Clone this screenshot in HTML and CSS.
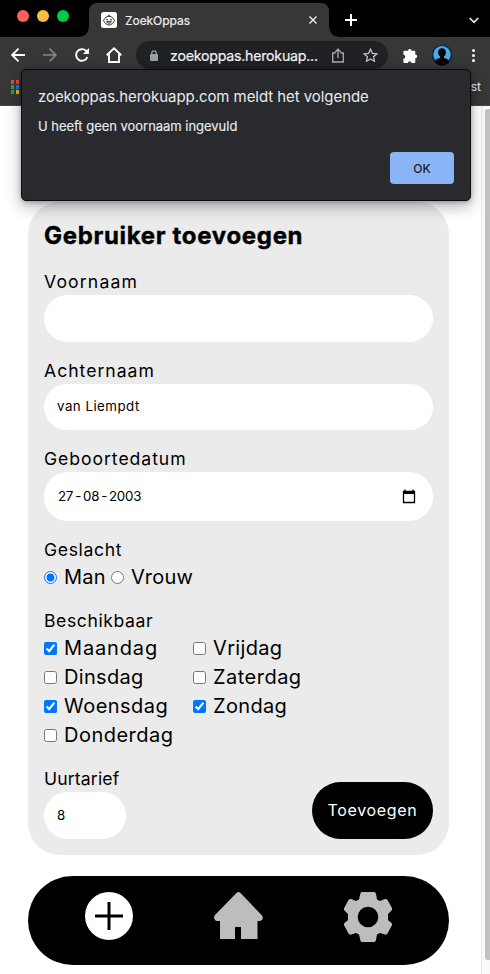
FILE: index.html
```html
<!DOCTYPE html>
<html lang="nl">
<head>
<meta charset="utf-8">
<title>ZoekOppas</title>
<link rel="stylesheet" href="styles.css">
</head>
<body>
<header class="browser">
  <div class="tabstrip">
    <div class="lights"><i class="light red"></i><i class="light yellow"></i><i class="light green"></i></div>
    <div class="tab">
      <svg class="favicon" width="16" height="16" viewBox="0 0 16 16"><rect width="16" height="16" rx="2.5" fill="#fff"/><path d="M2.5 8.4C4 5.500 6 4.300 8 4.300s4 1.200 5.500 4.100C12 11.500 10 13 8 13s-4-1.500-5.500-4.600zM7 4.300c0-1.500 2-1.500 2 .4M5.700 9.700c1 2 3.600 2 4.600 0z" fill="none" stroke="#222" stroke-width="1"/><circle cx="6" cy="7.800" r=".8"/><circle cx="10" cy="7.800" r=".8"/></svg>
      <span class="tab-title">ZoekOppas</span>
      <svg class="tab-close" width="8" height="8" viewBox="0 0 8 8"><path d="M.5.5l7 7m0-7l-7 7" stroke="#eee" stroke-width="1.400"/></svg>
    </div>
    <svg class="new-tab" width="12" height="12" viewBox="0 0 12 12"><path d="M6 0v12M0 6h12" stroke="#fff" stroke-width="2"/></svg>
    <svg class="chevron" width="10" height="7" viewBox="0 0 10 7"><path d="M.7 1L5 5.300 9.300 1" fill="none" stroke="#eee" stroke-width="1.700"/></svg>
  </div>
  <div class="toolbar">
    <svg class="back" width="14" height="14" viewBox="0 0 14 14"><path d="M14 7H1.500M7.500 .7L1.200 7l6.300 6.300" fill="none" stroke="#fff" stroke-width="1.900"/></svg>
    <svg class="forward" width="14" height="14" viewBox="0 0 14 14"><path d="M0 7h12.500M6.500 .7L12.800 7l-6.300 6.300" fill="none" stroke="#858585" stroke-width="1.700"/></svg>
    <svg class="reload" width="14" height="14" viewBox="0 0 14 14"><path d="M12.400 9A5.800 5.800 0 1 1 11 2.800L12.500 4.300" fill="none" stroke="#fff" stroke-width="1.900"/><path d="M14 0v6H8z" fill="#fff"/></svg>
    <svg class="home-button" width="16" height="16" viewBox="0 0 16 16"><path d="M.7 8.300L8 1.300l7.300 7M3 7v8h10V7" fill="none" stroke="#fff" stroke-width="1.900"/></svg>
    <div class="address">
      <svg class="lock" width="8" height="11" viewBox="0 0 8 11"><path d="M1.800 5V3a2.200 2.200 0 0 1 4.400 0v2" fill="none" stroke="#9aa0a6" stroke-width="1.300"/><rect y="4" width="8" height="7" rx="1" fill="#9aa0a6"/></svg>
      <span class="url">zoekoppas.herokuap...</span>
      <svg class="share" width="12" height="15" viewBox="0 0 12 15"><path d="M3.500 5H.7v9h10.600V5H8.500M6 10V1.300M3.200 4L6 1.200 8.800 4" fill="none" stroke="#aaadb0" stroke-width="1.300"/></svg>
      <svg class="star" width="15" height="14" viewBox="0 0 15 14"><path d="M7.500 1.200l1.900 4.100 4.500.5-3.300 3 .9 4.400-4-2.300-4 2.300.9-4.400-3.300-3 4.500-.5z" fill="none" stroke="#c0c2c5" stroke-width="1.300"/></svg>
    </div>
    <svg class="puzzle" width="15" height="15" viewBox="0 0 15 15"><path d="M5 2.700a1.800 1.800 0 0 1 3.600 0h2.700q1 0 1 1v2.700a1.900 1.900 0 0 1 0 3.800V14q0 1-1 1H8.400a1.700 1.700 0 0 0-3.400 0H1.400q-1 0-1-1v-3.400a1.900 1.900 0 0 0 0-3.800V3.700q0-1 1-1z" fill="#fff"/></svg>
    <svg class="avatar" width="22" height="22" viewBox="0 0 22 22"><circle cx="11" cy="11" r="10.500" fill="#142e43"/><circle cx="11" cy="10.500" r="8.600" fill="#4babe6"/><ellipse cx="11" cy="8.500" rx="3.800" ry="4.200" fill="#000"/><path d="M9 11h4v3c4 .5 5 2.500 5 4.800a10 10 0 0 1-14 0c0-2.300 1-4.300 5-4.800z" fill="#000"/></svg>
    <div class="menu"><i></i><i></i><i></i></div>
  </div>
  <div class="bookmarks">
    <div class="apps"><i class="r"></i><i class="r"></i><i class="g"></i><i class="b"></i><i class="g"></i><i class="y"></i></div>
    <span class="bookmark">st</span>
  </div>
</header>

<div class="viewport">
  <main class="page">
    <form class="card">
      <h1>Gebruiker toevoegen</h1>
      <div class="field">
        <label class="voornaam" for="voornaam">Voornaam</label>
        <input class="text-input" id="voornaam" type="text">
      </div>
      <div class="field">
        <label class="achternaam" for="achternaam">Achternaam</label>
        <input class="text-input short achter-input" id="achternaam" type="text" value="van Liempdt">
      </div>
      <div class="field">
        <div class="label geboorte">Geboortedatum</div>
        <div class="text-input date">
          <span>27<b>-</b>08<b>-</b>2003</span>
          <svg width="14" height="15" viewBox="0 0 14 15"><path d="M1.500 2.500h11v11h-11zM3 .5v2M11 .5v2" fill="none" stroke="#000" stroke-width="1.300"/><path d="M1 2h12v3H1z"/></svg>
        </div>
      </div>
      <div class="field">
        <div class="label geslacht">Geslacht</div>
        <div class="options">
          <label class="option man"><input type="radio" name="geslacht" checked><span>Man</span></label>
          <label class="option vrouw"><input type="radio" name="geslacht"><span>Vrouw</span></label>
        </div>
      </div>
      <div class="field">
        <div class="label beschikbaar">Beschikbaar</div>
        <div class="days">
          <label class="option maandag"><input type="checkbox" checked><span>Maandag</span></label>
          <label class="option dinsdag"><input type="checkbox"><span>Dinsdag</span></label>
          <label class="option"><input type="checkbox" checked><span>Woensdag</span></label>
          <label class="option"><input type="checkbox"><span>Donderdag</span></label>
          <label class="option vrijdag"><input type="checkbox"><span>Vrijdag</span></label>
          <label class="option"><input type="checkbox"><span>Zaterdag</span></label>
          <label class="option zondag"><input type="checkbox" checked><span>Zondag</span></label>
        </div>
      </div>
      <div class="bottom-row">
        <div class="field rate">
          <label class="uurtarief" for="tarief">Uurtarief</label>
          <input class="text-input" id="tarief" type="text" value="8">
        </div>
        <button class="submit" type="button">Toevoegen</button>
      </div>
    </form>
    <nav class="nav">
      <svg class="nav-add" width="48" height="48" viewBox="0 0 48 48"><circle cx="24" cy="24" r="24" fill="#fff"/><path d="M24 10v28M10 24h28" stroke="#000" stroke-width="3"/></svg>
      <svg class="nav-home" width="49" height="48" viewBox="0 0 49 48"><path d="M22.500 1Q24.500-1 26.500 1L48 23.500Q49.500 25.500 48 28Q47 29 45 29H43.500V47H27V35H21V47H6V29H3Q1 29 .5 27Q-.5 24.500 1 23z" fill="#bdbdbd"/></svg>
      <svg class="nav-gear" width="48" height="50" viewBox="0 0 48 50"><path fill-rule="evenodd" d="M18 0H30Q31.500 0 32 2L33 7.500L36 9L41 7Q42.500 6.500 43.500 8L48 16Q48.500 17.500 47.500 18.500L44 22V28L47.500 31Q48.500 32 47.800 33.500L43.500 41.500Q42.500 43 41 42.500L36 41L33 42.500L32 48Q31.500 50 30 50H18Q16.500 50 16.300 48L15 42.500L12 41L7 42.500Q5.500 43 4.500 41.500L.2 33.500Q-.5 32 .5 31L4 28V22L.5 18.500Q-.5 17.500 .2 16L4.500 8Q5.500 6.500 7 7L12 9L15 7.500L16.300 2Q16.500 0 18 0zM34.300 25a10.300 10.300 0 1 0-20.600 0a10.300 10.300 0 1 0 20.600 0z" fill="#bdbdbd"/></svg>
    </nav>
  </main>
  <div class="scrollbar"><div class="thumb"></div></div>
</div>

<div class="dialog">
  <div class="dialog-title">zoekoppas.herokuapp.com meldt het volgende</div>
  <div class="dialog-text">U heeft geen voornaam ingevuld</div>
  <button class="ok" type="button">OK</button>
</div>
</body>
</html>
```
FILE: styles.css
```css
* { box-sizing: border-box; }
body {
  margin: 0;
  width: 490px;
  height: 974px;
  overflow: hidden;
  position: relative;
  display: flex;
  flex-direction: column;
  font-family: Inter, "Liberation Sans", sans-serif;
  background: #fff;
  color: #000;
}
svg { display: block; flex: none; }

.browser { height: 106px; background: #373737; flex: none; border-bottom: 1px solid #484848; }
.tabstrip {
  height: 37px;
  display: flex;
  align-items: center;
  background: linear-gradient(#000, #000) top / 100% 28px no-repeat,
    linear-gradient(#000, #000) left bottom / 80px 11px no-repeat,
    linear-gradient(#000, #000) right bottom / 152px 11px no-repeat;
}
.lights { display: flex; gap: 8px; width: 89px; padding-left: 17px; margin-top: -5px; flex: none; }
.light { width: 12px; height: 12px; border-radius: 50%; }
.red { background: #ff5f5b; }
.yellow { background: #ffbd43; }
.green { background: #00ca4e; }
.tab {
  width: 240px;
  height: 34px;
  flex: none;
  align-self: flex-end;
  display: flex;
  align-items: center;
  padding: 0 12px 0 12px;
  background: #373737;
  border-radius: 8px 8px 0 0;
  position: relative;
}
.tab::before, .tab::after {
  content: "";
  position: absolute;
  bottom: 0;
  width: 9px;
  height: 9px;
}
.tab::before { left: -9px; background: radial-gradient(circle at 0 0, #000 8px, #373737 9px); }
.tab::after { right: -9px; background: radial-gradient(circle at 9px 0, #000 8px, #373737 9px); }
.tab-title { font-size: 12px; color: #eee; margin-left: 8px; letter-spacing: -0.05px; -webkit-text-stroke: 0.2px #eee; }
.tab-close { margin-left: auto; }
.new-tab { margin: 3px 0 0 16px; }
.chevron { margin: 3px 11px 0 auto; }

.toolbar { height: 37px; display: flex; align-items: center; padding: 0 0 1px 11px; }
.forward { margin-left: 18px; }
.reload { margin-left: 18px; }
.home-button { margin-left: 17px; }
.address {
  width: 252px;
  height: 28px;
  border-radius: 14px;
  background: #202124;
  margin-left: 14px;
  display: flex;
  align-items: center;
  padding-left: 14px;
}
.url { width: 149px; margin-left: 12px; font-size: 14.200px; letter-spacing: -0.24px; color: #f1f1f1; white-space: nowrap; -webkit-text-stroke: 0.2px #f1f1f1; }
.share { margin-left: 13px; }
.star { margin-left: 19px; }
.puzzle { margin-left: 15px; }
.avatar { margin-left: 13px; }
.menu { display: flex; flex-direction: column; gap: 2px; margin-left: 19px; }
.menu i { width: 3px; height: 3px; border-radius: 50%; background: #fff; }

.bookmarks { height: 31px; display: flex; align-items: center; justify-content: space-between; padding: 0 9px 6px 11px; }
.apps { display: grid; grid-template-columns: 3px 3px; grid-auto-rows: 4px; gap: 1px 2px; }
.r { background: #f34135; }
.g { background: #20a35d; }
.b { background: #1a7be8; }
.y { background: #f2af1b; }
.bookmark { font-size: 12px; color: #eee; }

.viewport { flex: 1; display: flex; min-height: 0; }
.page { flex: 1; padding: 96px 32px 0 28px; }
.scrollbar { width: 9px; border-left: 1px solid #e8e8e8; background: #fafafa; padding: 3px 0 0 3px; }
.thumb { width: 8px; height: 851px; background: #c1c1c1; border-radius: 3px; }

.card {
  width: 421px;
  height: 653px;
  border-radius: 32px;
  background: #ebebeb;
  padding: 16px;
  display: flex;
  flex-direction: column;
  justify-content: space-between;
}
h1 { margin: 0 0 -1px; font-size: 24px; line-height: 36px; font-weight: 700; letter-spacing: 0.68px; white-space: nowrap; -webkit-text-stroke: 0.4px #000; }
.field > label, .label { display: block; width: max-content; font-size: 17.600px; line-height: 23px; height: 25px; }
.field > .voornaam { letter-spacing: 1.150px; }
.field > .achternaam { letter-spacing: 1px; }
.geboorte { letter-spacing: 0.95px; }
.geslacht { letter-spacing: 0.65px; }
.beschikbaar { letter-spacing: 0.58px; }
.field > .uurtarief { letter-spacing: 0.15px; }
.text-input {
  display: block;
  width: 100%;
  height: 47px;
  border: 0;
  outline: 0;
  margin: 0;
  padding: 0 13px 2px;
  border-radius: 24px;
  background: #fff;
  font: 13.300px Inter, sans-serif;
  color: #000;
}
.short { height: 46px; }
.achter-input { letter-spacing: 0.48px; }
.date { height: 49px; padding: 0 17px 1px 14px; display: flex; align-items: center; justify-content: space-between; letter-spacing: -0.25px; }
.date b { font-weight: 400; margin: 0 2px; }
.options { display: flex; height: 29px; gap: 5px; }
.option { display: flex; align-items: center; font-size: 20px; line-height: 29px; height: 29px; white-space: nowrap; letter-spacing: 0.48px; }
.option input { width: 13px; height: 13px; margin: 0 7px 0 0; flex: none; }
.man { letter-spacing: 0.25px; }
.vrouw { letter-spacing: 0.2px; }
.maandag { letter-spacing: 0.85px; }
.dinsdag, .vrijdag, .zondag { letter-spacing: 0.33px; }
.days { display: grid; grid-template-rows: repeat(4, 29px); grid-auto-flow: column; grid-template-columns: 149px 1fr; }
.bottom-row { display: flex; justify-content: space-between; align-items: flex-end; }
.rate { width: 82px; }
.submit {
  width: 121px;
  height: 57px;
  border: 0;
  border-radius: 28.500px;
  background: #000;
  color: #fff;
  font: 16px Inter, sans-serif;
  letter-spacing: 0.68px;
  padding: 0 0 1px;
}

.nav {
  width: 421px;
  height: 89px;
  margin-top: 21px;
  border-radius: 44.500px;
  background: #000;
  display: flex;
  align-items: flex-start;
  justify-content: space-between;
  padding: 16px 57px;
}

.dialog {
  position: absolute;
  left: 21px;
  top: 69px;
  width: 450px;
  height: 132px;
  border: 1px solid #0c0c0e;
  border-radius: 5px;
  background: #292a2d;
  box-shadow: 0 5px 16px rgba(0, 0, 0, 0.32), 0 1px 4px rgba(0, 0, 0, 0.25);
  padding: 16px;
  display: flex;
  flex-direction: column;
  color: #e8eaed;
  white-space: nowrap;
}
.dialog-title { font-size: 15px; line-height: 22px; letter-spacing: -0.06px; }
.dialog-text { font-size: 13px; line-height: 18px; margin-top: 9px; letter-spacing: -0.03px; -webkit-text-stroke: 0.15px #e8eaed; }
.ok {
  width: 64px;
  height: 32px;
  margin-top: auto;
  align-self: flex-end;
  border: 0;
  border-radius: 4px;
  background: #8ab4f8;
  color: #202124;
  font: 500 12px Inter, sans-serif;
}
```
